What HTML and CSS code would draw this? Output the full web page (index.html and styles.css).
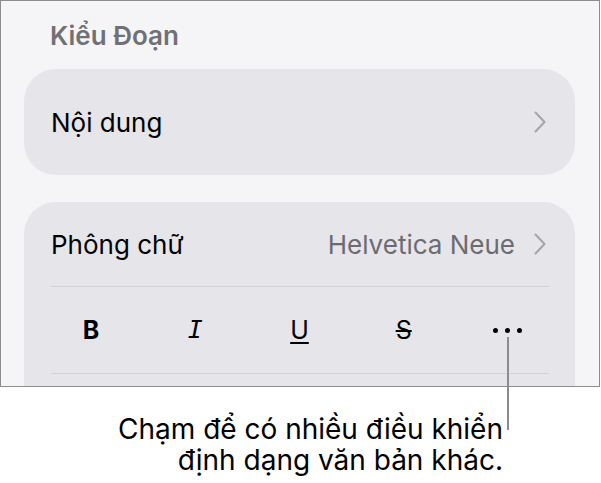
FILE: index.html
```html
<!DOCTYPE html>
<html lang="vi">
<head>
  <meta charset="UTF-8" />
  <title>Kiểu Đoạn</title>
  <link rel="stylesheet" href="styles.css">
</head>
<body>
  <div class="screen">
    <h2 class="section-title">Kiểu Đoạn</h2>

    <div class="group">
      <div class="row row-tall">
        <span class="label">Nội dung</span>
        <svg class="chevron" viewBox="0 0 12 22" width="12" height="22">
          <polyline points="1.5,1.5 10.5,11 1.5,20.5" />
        </svg>
      </div>
    </div>

    <div class="group">
      <div class="row">
        <span class="label">Phông chữ</span>
        <span class="value">Helvetica Neue</span>
        <svg class="chevron" viewBox="0 0 12 22" width="12" height="22">
          <polyline points="1.5,1.5 10.5,11 1.5,20.5" />
        </svg>
      </div>
      <div class="divider"></div>
      <div class="format-bar">
        <span class="fmt fmt-bold">B</span>
        <span class="fmt fmt-italic">I</span>
        <span class="fmt fmt-under">U</span>
        <span class="fmt fmt-strike">S</span>
        <span class="fmt fmt-more"><i></i><i></i><i></i></span>
      </div>
      <div class="divider"></div>
      <div class="row"></div>
    </div>
  </div>

  <p class="callout">Chạm để có nhiều điều khiển<br>định dạng văn bản khác.</p>
  <span class="leader"></span>
</body>
</html>
```

FILE: styles.css
```css
body {
  margin: 0;
  background: #fff;
  font-family: Inter, "Noto Sans", sans-serif;
  color: #000;
}

.screen {
  box-sizing: border-box;
  width: 600px;
  height: 387px;
  border: 1px solid #8c8c8c;
  background: #f5f5f7;
  padding: 20px 24px 0 23px;
  overflow: hidden;
}

.section-title {
  margin: 0 0 18px 26px;
  font-size: 26px;
  line-height: 30px;
  font-weight: 600;
  color: #707075;
}

.group {
  background: #e6e5ea;
  border-radius: 32px;
  margin-bottom: 27px;
}

.row {
  display: flex;
  align-items: center;
  height: 84px;
  padding: 0 29px 0 27px;
  font-size: 26px;
}

.row-tall {
  height: 106px;
}

.label {
  flex: 1;
}

.value {
  color: #6c6c70;
  margin-right: 19px;
}

.chevron {
  fill: none;
  stroke: #a4a4a9;
  stroke-width: 2;
  stroke-linecap: round;
  stroke-linejoin: round;
}

.divider {
  height: 1px;
  margin: 0 26px 0 27px;
  background: #d1d1d6;
}

.format-bar {
  display: grid;
  grid-template-columns: repeat(5, 1fr);
  align-items: center;
  height: 86px;
  margin: 0 15px;
}

.fmt {
  text-align: center;
  font-size: 25px;
  line-height: 30px;
}

.fmt-bold {
  font-weight: 700;
}

.fmt-italic {
  font-family: "DejaVu Sans Mono", monospace;
  font-style: italic;
}

.fmt-under {
  text-decoration: underline;
  text-decoration-thickness: 2px;
  text-underline-offset: 3px;
}

.fmt-strike {
  text-decoration: line-through;
  text-decoration-thickness: 2px;
}

.fmt-more {
  display: flex;
  justify-content: center;
  gap: 7px;
}

.fmt-more i {
  width: 5px;
  height: 5px;
  border-radius: 50%;
  background: #000;
}

.callout {
  margin: 27px 0 0;
  width: 503px;
  text-align: right;
  font-size: 28px;
  line-height: 31px;
}

.leader {
  position: absolute;
  left: 507px;
  top: 337px;
  width: 2px;
  height: 93px;
  background: #8c8c8c;
}
```
